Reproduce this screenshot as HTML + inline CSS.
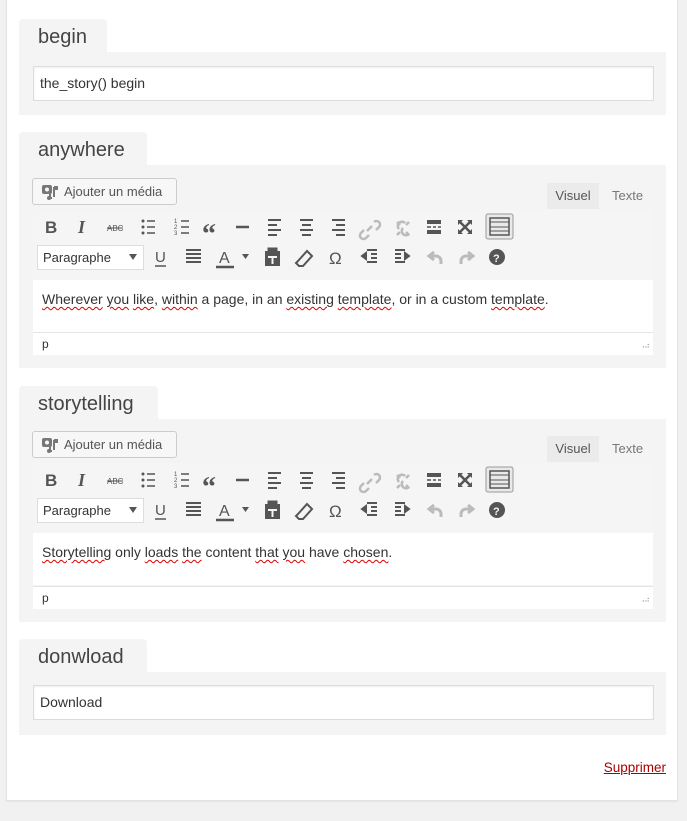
<!DOCTYPE html>
<html><head><meta charset="utf-8"><style>
*{margin:0;padding:0;box-sizing:border-box}
body{width:687px;height:821px;background:#f1f1f1;position:relative;overflow:hidden;font-family:"Liberation Sans",sans-serif;color:#333}
.card{position:absolute;left:6px;top:-2px;width:672px;height:803px;background:#fff;border:1px solid #e3e3e3;box-shadow:0 1px 1px rgba(0,0,0,.05)}
.a{position:absolute}
.tab{position:absolute;background:#f4f4f4;border-radius:4px 4px 0 0;font-size:20px;color:#444;padding-left:19px;line-height:36px;height:33px}
.body{position:absolute;left:19px;width:647px;background:#f4f4f4}
.inp{position:absolute;left:33px;width:621px;height:35px;background:#fff;border:1px solid #ddd;box-shadow:inset 0 1px 2px rgba(0,0,0,.07);font-size:14px;line-height:33px;padding-left:6px;color:#333}
.media{position:absolute;left:32px;width:145px;height:27px;background:#f7f7f7;border:1px solid #ccc;border-radius:3px;font-size:13px;line-height:25px;color:#555;padding-left:31px}
.vis{position:absolute;left:547px;width:52px;height:26px;background:#ebebeb;font-size:13px;color:#555;line-height:26px;text-align:center}
.tx{position:absolute;left:612px;font-size:13px;color:#777;line-height:26px}
.tb{position:absolute;left:33px;width:620px;height:70px;background:#f5f5f5}
.cont{position:absolute;left:33px;width:620px;height:52px;background:#fff;font-size:14px;color:#333;padding:11px 0 0 9px}
.stat{position:absolute;left:33px;width:620px;height:23px;background:#fff;border-top:1px solid #e5e5e5;font-size:12px;padding:4px 0 0 9px;color:#333}
.sp{text-decoration:underline wavy #d00;text-decoration-thickness:1px;text-underline-offset:2px}
</style></head><body>
<div class="card"></div>

<div class="tab" style="left:19px;top:19px;width:88px">begin</div>
<div class="body" style="top:52px;height:63px"></div>
<div class="inp" style="top:66px">the_story() begin</div>

<!-- anywhere -->
<div class="tab" style="left:19px;top:132px;width:128px">anywhere</div>
<div class="body" style="top:165px;height:203px"></div>
<div class="media" style="top:178px"><svg class="a" style="left:8px;top:5px" width="18" height="16" viewBox="0 0 18 16"><rect x="1" y="1" width="10" height="9" rx="2" fill="#777"/><circle cx="6" cy="5.5" r="2" fill="#f7f7f7"/><path d="M13 3v10M13 3h3v2h-3M9 10v4h2" stroke="#777" stroke-width="2" fill="none"/><circle cx="8" cy="14" r="2" fill="#777"/></svg>Ajouter un média</div>
<div class="vis" style="top:183px">Visuel</div><div class="tx" style="top:183px">Texte</div>
<div class="tb" style="top:210px"><svg width="620" height="70" class="ic"></svg></div>
<div class="cont" style="top:280px"><span class="sp">Wherever</span> <span class="sp">you</span> <span class="sp">like</span>, <span class="sp">within</span> a page, in an <span class="sp">existing</span> <span class="sp">template</span>, or in a custom <span class="sp">template</span>.</div>
<div class="stat" style="top:332px">p<span class="a" style="right:4px;top:8px;font-size:8px;color:#999;letter-spacing:-1px">⠠⠴</span></div>

<!-- storytelling -->
<div class="tab" style="left:19px;top:386px;width:139px">storytelling</div>
<div class="body" style="top:419px;height:203px"></div>
<div class="media" style="top:431px"><svg class="a" style="left:8px;top:5px" width="18" height="16" viewBox="0 0 18 16"><rect x="1" y="1" width="10" height="9" rx="2" fill="#777"/><circle cx="6" cy="5.5" r="2" fill="#f7f7f7"/><path d="M13 3v10M13 3h3v2h-3M9 10v4h2" stroke="#777" stroke-width="2" fill="none"/><circle cx="8" cy="14" r="2" fill="#777"/></svg>Ajouter un média</div>
<div class="vis" style="top:436px">Visuel</div><div class="tx" style="top:436px">Texte</div>
<div class="tb" style="top:463px"><svg width="620" height="70" class="ic"></svg></div>
<div class="cont" style="top:533px"><span class="sp">Storytelling</span> only <span class="sp">loads</span> <span class="sp">the</span> content <span class="sp">that</span> <span class="sp">you</span> have <span class="sp">chosen</span>.</div>
<div class="stat" style="top:586px">p<span class="a" style="right:4px;top:8px;font-size:8px;color:#999;letter-spacing:-1px">⠠⠴</span></div>

<!-- donwload -->
<div class="tab" style="left:19px;top:639px;width:128px">donwload</div>
<div class="body" style="top:672px;height:63px"></div>
<div class="inp" style="top:685px">Download</div>

<div class="a" style="right:21px;top:760px;font-size:13.5px;color:#a00;text-decoration:underline">Supprimer</div>

<script>
var t='<g fill="#555" stroke="#555" font-family="Liberation Sans">'+
'<text x="12" y="23" font-size="17" font-weight="bold" stroke="none">B</text>'+
'<text x="45" y="23" font-size="18" font-style="italic" font-family="Liberation Serif" font-weight="bold" stroke="none">I</text>'+
'<text x="74" y="21" font-size="8" stroke="none">ABC</text><line x1="74" y1="18" x2="90" y2="18" stroke-width="1"/>'+
'<circle cx="110" cy="11" r="1.5" stroke="none"/><circle cx="110" cy="17" r="1.5" stroke="none"/><circle cx="110" cy="23" r="1.5" stroke="none"/><path d="M114 11h8M114 17h8M114 23h8" stroke-width="1.5"/>'+
'<path d="M148 11h8M148 17h8M148 23h8" stroke-width="1.5"/><text x="141" y="13" font-size="6" stroke="none">1</text><text x="141" y="19" font-size="6" stroke="none">2</text><text x="141" y="25" font-size="6" stroke="none">3</text>'+
'<text x="169" y="33" font-size="28" font-weight="bold" stroke="none" font-family="Liberation Serif">“</text>'+
'<path d="M203 17h13" stroke-width="2.5"/>'+
'<path d="M235 10h13M235 15h9M235 20h13M235 25h9" stroke-width="2"/>'+
'<path d="M267 10h13M269 15h9M267 20h13M269 25h9" stroke-width="2"/>'+
'<path d="M299 10h13M303 15h9M299 20h13M303 25h9" stroke-width="2"/>'+
'<g stroke="#bbb" stroke-width="2.5" fill="none"><path d="M334 21l5-5M341 12a3 3 0 015 5l-3 3M331 20l-3 3a3 3 0 005 5l3-3"/><path d="M364 12l3 3M373 22l3 3M364 25l3-3M373 15l3-3M366 19a4 4 0 016-6M370 18a4 4 0 006 6"/></g>'+
'<path d="M394 10h14v4h-14zM394 20h14v4h-14z" stroke="none"/><path d="M394 17h4M400 17h3M405 17h3" stroke-width="1.5"/>'+
'<path d="M426 11l12 12M438 11l-12 12" stroke-width="2.5"/><path d="M425 10h5l-5 5zM439 10h-5l5 5zM425 24h5l-5-5zM439 24h-5l5-5z" stroke="none"/>'+
'<rect x="453" y="4" width="27" height="25" rx="2" fill="#e9e9e9" stroke="#999" stroke-width="1"/>'+
'<rect x="457" y="8" width="19" height="17" fill="none" stroke-width="1.5"/><path d="M457 12h19M457 17h19M457 21h19" stroke-width="1"/>'+
'<rect x="4.5" y="35.5" width="106" height="24" fill="#fff" stroke="#ddd" stroke-width="1"/>'+
'<text x="10" y="52" font-size="13" stroke="none" fill="#333">Paragraphe</text><path d="M96 44h8l-4 6z" stroke="none"/>'+
'<text x="122" y="52" font-size="15" stroke="none">U</text><path d="M122 56h11" stroke-width="1.5"/>'+
'<path d="M153 40h15M153 44h15M153 48h15M153 52h15" stroke-width="2"/>'+
'<text x="186" y="53" font-size="16" stroke="none">A</text><path d="M183 57h18" stroke-width="2.5"/><path d="M209 44h7l-3.5 5z" stroke="none"/>'+
'<path d="M232 41h15v15h-15z" stroke="none"/><rect x="235" y="38" width="9" height="5" fill="#555"/><path d="M235 47h9M239.5 47v7" stroke="#f5f5f5" stroke-width="2"/>'+
'<path d="M265 51l9-10 5 5-9 10h-4l-3-3z" fill="none" stroke-width="2"/>'+
'<text x="296" y="54" font-size="17" stroke="none">Ω</text>'+
'<path d="M334 40h10M338 44h6M338 48h6M334 52h10M329 46l4-3v6z" stroke-width="2"/>'+
'<path d="M362 40h10M362 44h6M362 48h6M362 52h10M376 46l-4-3v6z" stroke-width="2"/>'+
'<path d="M408 54v-3a5 5 0 00-5-5h-6M401 42l-5 4 5 4" stroke="#bbb" stroke-width="3" fill="none"/>'+
'<path d="M428 54v-3a5 5 0 015-5h6M435 42l5 4-5 4" stroke="#bbb" stroke-width="3" fill="none"/>'+
'<circle cx="464" cy="47" r="8" stroke="none"/><text x="460" y="52" font-size="11" font-weight="bold" fill="#f5f5f5" stroke="none">?</text>'+
'</g>';
document.querySelectorAll('svg.ic').forEach(function(s){s.innerHTML=t;});
</script>
</body></html>
